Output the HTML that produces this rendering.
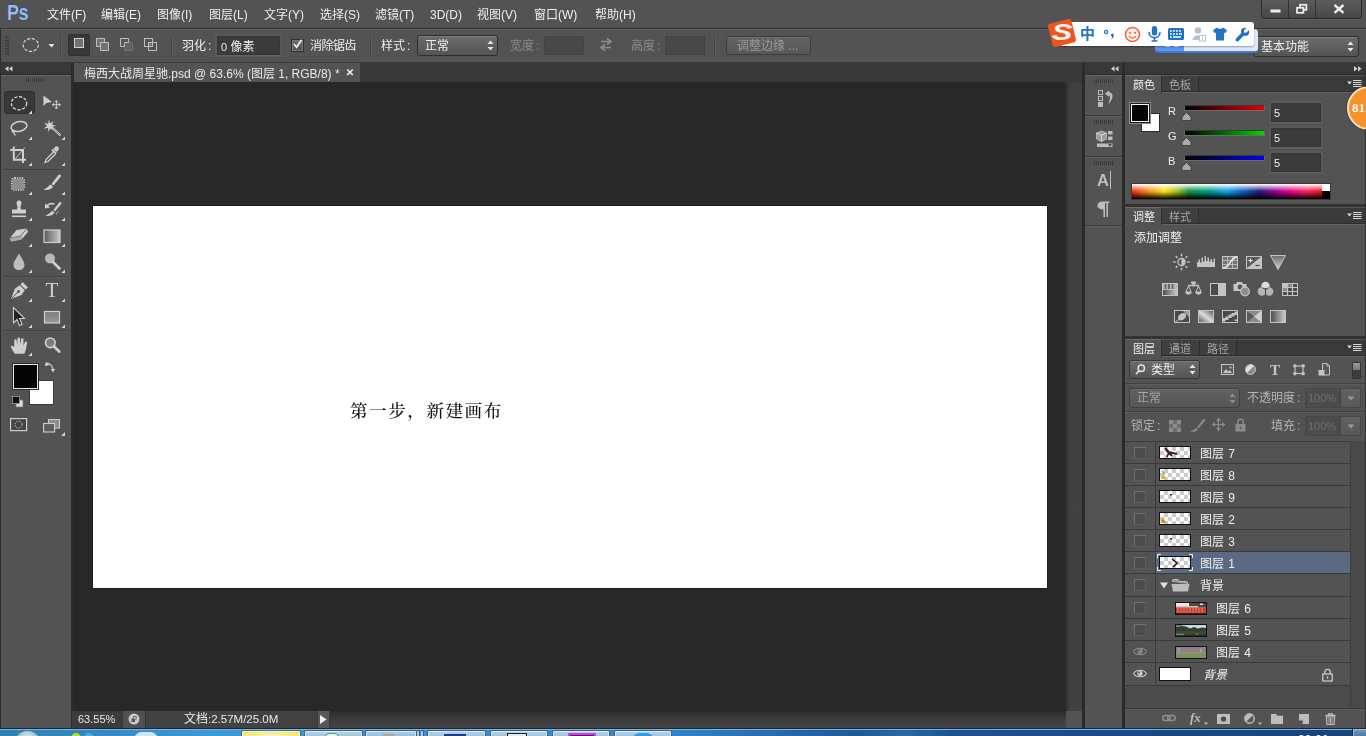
<!DOCTYPE html>
<html lang="zh-CN">
<head>
<meta charset="utf-8">
<title>梅西大战周星驰.psd</title>
<style>
*{box-sizing:border-box;margin:0;padding:0}
html,body{width:1366px;height:736px;overflow:hidden;background:#535353}
body{position:relative;font-family:"Liberation Sans","Noto Sans CJK SC",sans-serif;font-size:12px;color:#eeeeee;line-height:1}
#root{position:absolute;left:0;top:0;width:1366px;height:736px}
span{will-change:transform}
.a{position:absolute}
.t{position:absolute;white-space:nowrap;line-height:14px;height:14px}
svg{position:absolute;overflow:visible}
/* menubar */
#menubar{left:0;top:0;width:1366px;height:28px;background:#535353}
#menubar .t{top:8px;color:#eeeeee}
#mline{left:0;top:28px;width:1366px;height:1px;background:#333}
#pslogo{left:7px;top:1px;font-size:22.5px;font-weight:bold;color:#96bfec;letter-spacing:-0.5px;line-height:24px;height:24px;transform:scaleX(0.8);transform-origin:0 0;text-shadow:0 0 1px #1d4e80}
#winctl{left:1261px;top:0;width:101px;height:19px;border:1px solid #2a2a2a;border-top:none;border-radius:0 0 4px 4px;background:linear-gradient(#5c5c5c,#474747);overflow:hidden;box-shadow:0 1px 0 #626262}
#winctl .wc{top:0;height:19px;border-right:1px solid #333}
/* options bar */
#optbar{left:0;top:29px;width:1366px;height:34px;background:#535353;border-top:1px solid #626262;border-bottom:1px solid #333}
.sep{position:absolute;top:36px;width:1px;height:20px;background:#444;box-shadow:1px 0 0 #5e5e5e}
.field{position:absolute;background:#3b3b3b;border:1px solid #363636;box-shadow:0 0 0 2px rgba(255,255,255,.035),0 1px 0 #5c5c5c}
.c{font-style:normal;margin-left:2px}
.dim{color:#8a8a8a}
.fdim{background:#484848;border-color:#444;box-shadow:none}
/* work area */
#dark-top{left:0;top:62px;width:1366px;height:12px;background:#3a3a3a}
#canvasbg{left:74px;top:82px;width:992px;height:629px;background:#282828}
#canvas{left:93px;top:206px;width:954px;height:382px;background:#fff;box-shadow:0 0 0 1px #1e1e1e}
#doctabbar{left:74px;top:63px;width:1008px;height:20px;background:#393939}
#doctab{left:74px;top:63px;width:286px;height:19px;background:#535353}
/* tools */
#toolhead{left:0;top:63px;width:71px;height:12px;background:#383838;border-bottom:1px solid #2c2c2c}
#tools{left:0;top:75px;width:71px;height:653px;background:#535353;border-top:1px solid #666}
#toolgap{left:71px;top:63px;width:3px;height:665px;background:#2b2b2b}
/* right */
#vscroll{left:1065px;top:83px;width:17px;height:628px;background:linear-gradient(90deg,#2a2a2a 0,#3c3c3c 4px,#424242 7px,#404040 100%)}
#rgap1{left:1082px;top:63px;width:3px;height:665px;background:#2b2b2b}
#iconcol{left:1085px;top:75px;width:37px;height:653px;background:#535353;border-top:1px solid #666}
#rgap2{left:1122px;top:63px;width:3px;height:665px;background:#2b2b2b}
#panels{left:1125px;top:75px;width:241px;height:653px;background:#535353}
#righthead{left:1085px;top:63px;width:281px;height:12px;background:#383838;border-bottom:1px solid #2c2c2c}
#spectrum{background:linear-gradient(rgba(255,255,255,1) 0%,rgba(255,255,255,0) 48%,rgba(0,0,0,0) 52%,rgba(0,0,0,1) 100%),linear-gradient(90deg,#ee2a1c 0%,#f28420 8%,#f4e41c 17%,#a2ba20 24%,#109440 30%,#009482 40%,#10a2e4 50%,#1060c4 58%,#221a74 67%,#860094 74%,#e40084 83%,#f42462 92%,#ea1212 100%)}
.chk{border:1px solid #111;overflow:hidden;background-color:#fff;background-image:linear-gradient(45deg,#ccc 25%,transparent 25%,transparent 75%,#ccc 75%),linear-gradient(45deg,#ccc 25%,transparent 25%,transparent 75%,#ccc 75%);background-size:8px 8px;background-position:0 0,4px 4px}
.th6{background:linear-gradient(#b8b8b0 0,#908878 35%,#c83028 45%,#d84838 70%,#7a3028 85%,#3a3a2a 100%)}
.th5{background:linear-gradient(#a8c0d8 0,#8098a8 25%,#3a4a38 40%,#2e3a2c 75%,#485838 100%)}
.th4{background:linear-gradient(#8a8a80 0,#a09088 30%,#988888 50%,#7a9058 60%,#88a060 100%)}
#ctext{left:350px;top:399px;font-family:"Noto Serif CJK SC","Liberation Serif",serif;font-weight:500;font-size:17.6px;line-height:22px;color:#141414;letter-spacing:1.5px;white-space:nowrap}
/* status */
#status{left:74px;top:711px;width:1008px;height:17px;background:#3a3a3a}
/* taskbar */
#taskbar{left:0;top:728px;width:1366px;height:8px;background:#1d5a8e}
</style>
</head>
<body>
<div id="root">
<div class="a" id="menubar">
<span class="t" style="left:47px">文件(F)</span>
<span class="t" style="left:101px">编辑(E)</span>
<span class="t" style="left:157px">图像(I)</span>
<span class="t" style="left:209px">图层(L)</span>
<span class="t" style="left:264px">文字(Y)</span>
<span class="t" style="left:320px">选择(S)</span>
<span class="t" style="left:375px">滤镜(T)</span>
<span class="t" style="left:430px">3D(D)</span>
<span class="t" style="left:477px">视图(V)</span>
<span class="t" style="left:534px">窗口(W)</span>
<span class="t" style="left:595px">帮助(H)</span>
<div class="a" id="winctl">
<div class="a wc" style="left:0;width:27px"><svg width="27" height="18" style="left:0;top:0"><rect x="8.5" y="9.5" width="10" height="3" fill="#ececec"/></svg></div>
<div class="a wc" style="left:27px;width:27px"><svg width="27" height="18" style="left:0;top:0"><rect x="11" y="4.8" width="6.4" height="5" fill="none" stroke="#ececec" stroke-width="1.8"/><rect x="8" y="7.8" width="6.4" height="5" fill="#505050" stroke="#ececec" stroke-width="1.8"/></svg></div>
<div class="a wc" style="left:54px;width:46px;border-right:none"><svg width="46" height="18" style="left:0;top:0"><path d="M18.5 5 L27.5 12.8 M27.5 5 L18.5 12.8" stroke="#ececec" stroke-width="2.4" fill="none"/></svg></div>
</div>
</div>
<div class="a" id="mline"></div>
<div class="a" id="optbar"></div>
<!--OPT_START-->
<!-- options bar content -->
<div class="a" style="left:5px;top:36px;width:4px;height:20px;background:repeating-linear-gradient(#3a3a3a 0 1px,#535353 1px 2px)"></div>
<svg width="20" height="18" style="left:21px;top:36px"><ellipse cx="9.8" cy="9" rx="7.6" ry="6.4" fill="none" stroke="#dcdcdc" stroke-width="1.1" stroke-dasharray="3.2 1.6"/></svg>
<svg width="8" height="5" style="left:48px;top:44px"><path d="M0.5 0 L6.5 0 L3.5 3.5 Z" fill="#e8e8e8"/></svg>
<div class="sep" style="left:60px"></div>
<div class="a" style="left:68px;top:34px;width:22px;height:22px;background:#383838;border:1px solid #303030;border-radius:2px"></div>
<svg width="12" height="12" style="left:73px;top:37px"><rect x="1.5" y="1.5" width="9" height="9" fill="#727272" stroke="#cfcfcf"/></svg>
<svg width="14" height="14" style="left:96px;top:38px"><rect x="0.5" y="0.5" width="8" height="8" fill="#727272" stroke="#bdbdbd"/><rect x="4.5" y="4.5" width="8" height="8" fill="#727272" stroke="#bdbdbd"/></svg>
<svg width="14" height="14" style="left:120px;top:38px"><rect x="4.5" y="4.5" width="8" height="8" fill="#626262" stroke="#707070"/><path d="M0.5 8.5 V0.5 H8.5 V4.5 H4.5 V8.5 Z" fill="#585858" stroke="#bdbdbd"/></svg>
<svg width="14" height="14" style="left:144px;top:38px"><rect x="0.5" y="0.5" width="8" height="8" fill="none" stroke="#bdbdbd"/><rect x="4.5" y="4.5" width="8" height="8" fill="none" stroke="#bdbdbd"/><rect x="5" y="5" width="3" height="3" fill="#727272"/></svg>
<div class="sep" style="left:171px"></div>
<span class="t" style="left:182px;top:39px">羽化<i class="c">:</i></span>
<div class="field" style="left:217px;top:36px;width:63px;height:19px"></div>
<span class="t" style="left:221px;top:40px"><span style="font-size:11px">0</span> 像素</span>
<div class="a" style="left:291px;top:39px;width:13px;height:13px;background:linear-gradient(#6a6a6a,#505050);border:1px solid #2e2e2e;box-shadow:inset 0 0 0 1px #7a7a7a"></div>
<svg width="13" height="13" style="left:291px;top:38px"><path d="M3 6 L5.6 9.2 L10.6 1.8" fill="none" stroke="#f0f0f0" stroke-width="1.8"/></svg>
<span class="t" style="left:310px;top:39px;letter-spacing:-0.5px">消除锯齿</span>
<div class="sep" style="left:370px"></div>
<span class="t" style="left:381px;top:39px">样式<i class="c">:</i></span>
<div class="a" style="left:417px;top:35px;width:81px;height:21px;border:1px solid #2e2e2e;border-radius:3px;background:linear-gradient(#6c6c6c,#545454);box-shadow:inset 0 1px 0 #7c7c7c"></div>
<span class="t" style="left:425px;top:39px">正常</span>
<svg width="7" height="11" style="left:487px;top:40px"><path d="M0.5 4 L3.5 0.5 L6.5 4 Z M0.5 7 L3.5 10.5 L6.5 7 Z" fill="#e8e8e8"/></svg>
<span class="t dim" style="left:510px;top:39px">宽度<i class="c">:</i></span>
<div class="field fdim" style="left:544px;top:36px;width:40px;height:19px"></div>
<svg width="16" height="13" style="left:598px;top:38px"><path d="M3 3.5 H12 M9 0.5 L13 3.5 L9 6.5 M13 9.5 H4 M7 6.5 L3 9.5 L7 12.5" fill="none" stroke="#8a8a8a" stroke-width="1.6"/></svg>
<span class="t dim" style="left:631px;top:39px">高度<i class="c">:</i></span>
<div class="field fdim" style="left:665px;top:36px;width:40px;height:19px"></div>
<div class="sep" style="left:714px"></div>
<div class="a" style="left:726px;top:36px;width:85px;height:19px;border:1px solid #3c3c3c;border-radius:3px;background:linear-gradient(#626262,#575757);box-shadow:inset 0 1px 0 #6e6e6e"></div>
<span class="t" style="left:737px;top:39px;color:#9a9a9a">调整边缘 ...</span>
<div class="a" style="left:1253px;top:36px;width:106px;height:21px;border:1px solid #2e2e2e;border-radius:3px;background:linear-gradient(#6c6c6c,#545454);box-shadow:inset 0 1px 0 #7c7c7c"></div>
<span class="t" style="left:1261px;top:40px">基本功能</span>
<svg width="7" height="11" style="left:1347px;top:41px"><path d="M0.5 4 L3.5 0.5 L6.5 4 Z M0.5 7 L3.5 10.5 L6.5 7 Z" fill="#e8e8e8"/></svg>
<!--OPT_END-->
<div class="a" id="dark-top"></div>
<div class="a" id="toolhead"></div>
<div class="a" id="tools"></div>
<div class="a" id="toolgap"></div>
<div class="a" style="left:0;top:29px;width:1px;height:699px;background:#2e2e2e"></div>
<!--TOOLS_START-->
<!-- toolbar content -->
<svg width="8" height="6" style="left:5px;top:66px"><path d="M3.5 0 V5.5 L0 2.75 Z M7.5 0 V5.5 L4 2.75 Z" fill="#d0d0d0"/></svg>
<div class="a" style="left:26px;top:78px;width:19px;height:4px;background:repeating-linear-gradient(90deg,#3a3a3a 0 1px,#535353 1px 2px)"></div>
<div class="a" style="left:4px;top:91px;width:31px;height:23px;background:#383838;border:1px solid #2f2f2f;border-radius:3px"></div>
<div class="a" style="left:4px;top:169px;width:63px;height:1px;background:#424242;box-shadow:0 1px 0 #5b5b5b"></div>
<div class="a" style="left:4px;top:276px;width:63px;height:1px;background:#424242;box-shadow:0 1px 0 #5b5b5b"></div>
<div class="a" style="left:4px;top:330px;width:63px;height:1px;background:#424242;box-shadow:0 1px 0 #5b5b5b"></div>
<svg width="24" height="24" viewBox="0 0 24 24" style="left:7px;top:91px"><ellipse cx="12" cy="12.2" rx="7.7" ry="6.6" fill="none" stroke="#e6e6e6" stroke-width="1.2" stroke-dasharray="3.2 1.6"/></svg>
<svg width="4" height="4" style="left:28px;top:110px"><path d="M4 0.5 V4 H0.5 Z" fill="#d8d8d8"/></svg>
<svg width="24" height="24" viewBox="0 0 24 24" style="left:40px;top:91px"><path d="M3.5 4.5 L3.5 15 L6.5 12 L12 11 Z" fill="#cfcfcf"/><path d="M16.4 9.8 V17.6 M12.5 13.7 H20.3 M15 11.2 L16.4 9.4 L17.8 11.2 M15 16.2 L16.4 18 L17.8 16.2 M14 12.3 L12.2 13.7 L14 15.1 M18.8 12.3 L20.6 13.7 L18.8 15.1" fill="none" stroke="#cfcfcf" stroke-width="1"/></svg>
<svg width="24" height="24" viewBox="0 0 24 24" style="left:7px;top:117px"><ellipse cx="12" cy="9.5" rx="8" ry="4.8" transform="rotate(-12 12 9.5)" fill="none" stroke="#cfcfcf" stroke-width="1.5"/><path d="M5.5 13 C4 15 7.5 16 7.5 14 C7.5 12.5 5.5 13.5 6.5 15.5 C7 17 8 17.5 8.5 18.5" fill="none" stroke="#cfcfcf" stroke-width="1.2"/></svg>
<svg width="4" height="4" style="left:28px;top:136px"><path d="M4 0.5 V4 H0.5 Z" fill="#d8d8d8"/></svg>
<svg width="24" height="24" viewBox="0 0 24 24" style="left:40px;top:117px"><path d="M9 2.5 L10 6.5 L13.5 4 L12 7.8 L16 8.5 L12.3 10 L14 13.5 L10.2 11.5 L8.5 15 L8 11 L3.5 11.5 L7 9 L4 5.5 L8 7 Z" fill="#cfcfcf"/><path d="M12 10.5 L20.5 18.5" stroke="#cfcfcf" stroke-width="2.2"/><path d="M12.5 11 L20 18" stroke="#666" stroke-width="0.7"/></svg>
<svg width="4" height="4" style="left:61px;top:136px"><path d="M4 0.5 V4 H0.5 Z" fill="#d8d8d8"/></svg>
<svg width="24" height="24" viewBox="0 0 24 24" style="left:7px;top:143px"><path d="M6.8 3.5 V16.8 H19 M3.2 7 H16 V20" fill="none" stroke="#cfcfcf" stroke-width="2"/><path d="M8.5 15.5 L18 4.5" stroke="#cfcfcf" stroke-width="0.9"/></svg>
<svg width="4" height="4" style="left:28px;top:162px"><path d="M4 0.5 V4 H0.5 Z" fill="#d8d8d8"/></svg>
<svg width="24" height="24" viewBox="0 0 24 24" style="left:40px;top:143px"><path d="M15 4 C16.5 2 20 4.5 18.5 7 L16.5 9 L13.5 6 Z" fill="#cfcfcf"/><path d="M12 6.5 L16 10.5" stroke="#cfcfcf" stroke-width="2"/><path d="M13.5 9 L6 16.5 L5 19.5 L8 18.5 L15.5 11" fill="none" stroke="#cfcfcf" stroke-width="1.3"/></svg>
<svg width="4" height="4" style="left:61px;top:162px"><path d="M4 0.5 V4 H0.5 Z" fill="#d8d8d8"/></svg>
<svg width="24" height="24" viewBox="0 0 24 24" style="left:7px;top:172px"><rect x="5.5" y="6.5" width="11" height="11" rx="2" fill="#8e8e8e"/><rect x="4.8" y="5.8" width="12.4" height="12.4" rx="3" fill="none" stroke="#cfcfcf" stroke-width="1.8" stroke-dasharray="1.2 1.2"/></svg>
<svg width="4" height="4" style="left:28px;top:191px"><path d="M4 0.5 V4 H0.5 Z" fill="#d8d8d8"/></svg>
<svg width="24" height="24" viewBox="0 0 24 24" style="left:40px;top:172px"><path d="M19.5 2.5 C21 2.5 21.5 3.8 20.5 5 L13.5 13.5 L11.5 12 L18 3.5 C18.5 2.8 19 2.5 19.5 2.5 Z" fill="#cfcfcf"/><path d="M10.5 12.5 L13 14.5 C12 17.5 7 18.5 3.5 17.5 C6.5 16.5 8 14.5 10.5 12.5 Z" fill="#cfcfcf"/></svg>
<svg width="4" height="4" style="left:61px;top:191px"><path d="M4 0.5 V4 H0.5 Z" fill="#d8d8d8"/></svg>
<svg width="24" height="24" viewBox="0 0 24 24" style="left:7px;top:198px"><path d="M12 2.5 C14.5 2.5 15 5 14 7 C13.3 8.5 13.5 10 14 11.5 H19 V15.5 H5 V11.5 H10 C10.5 10 10.7 8.5 10 7 C9 5 9.5 2.5 12 2.5 Z" fill="#cfcfcf"/><rect x="5" y="17.5" width="14" height="1.6" fill="#cfcfcf"/></svg>
<svg width="4" height="4" style="left:28px;top:217px"><path d="M4 0.5 V4 H0.5 Z" fill="#d8d8d8"/></svg>
<svg width="24" height="24" viewBox="0 0 24 24" style="left:40px;top:198px"><path d="M20.5 4 C21.5 4.3 21.8 5.3 21 6.3 L15 13.5 L13.2 12.2 L19 4.8 C19.4 4.2 20 3.9 20.5 4 Z" fill="#cfcfcf"/><path d="M12.3 12.8 L14.5 14.6 C13.5 17.5 9 18.5 5.5 17.8 C8.5 16.6 10 14.8 12.3 12.8 Z" fill="#cfcfcf"/><path d="M15 5.5 C12 4 8.5 5 7 7 L5 5.5 L5 10.5 L10 9.5 L8.3 8 C9.8 6.5 12.5 6.3 14 7 Z" fill="#cfcfcf"/><path d="M16 16 L19 12.5" stroke="#cfcfcf" stroke-width="1.2" stroke-dasharray="1 1.2"/></svg>
<svg width="4" height="4" style="left:61px;top:217px"><path d="M4 0.5 V4 H0.5 Z" fill="#d8d8d8"/></svg>
<svg width="24" height="24" viewBox="0 0 24 24" style="left:7px;top:224px"><path d="M9.5 6 L20 4.5 L21 8 L14.5 15.5 L4 17.5 L3 14 Z" fill="#cfcfcf"/><path d="M3 14 L13.5 12 L20 4.5" fill="none" stroke="#6a6a6a" stroke-width="1"/><path d="M13.5 12 L14.5 15.5" stroke="#6a6a6a" stroke-width="0.8"/><path d="M3.2 14.2 L13.4 12.2 L14.3 15.4 L4 17.4 Z" fill="#a8a8a8"/></svg>
<svg width="4" height="4" style="left:28px;top:243px"><path d="M4 0.5 V4 H0.5 Z" fill="#d8d8d8"/></svg>
<svg width="24" height="24" viewBox="0 0 24 24" style="left:40px;top:224px"><defs><linearGradient id="gtool" x1="0" x2="1"><stop offset="0" stop-color="#5a5a5a"/><stop offset="1" stop-color="#c8c8c8"/></linearGradient></defs><rect x="4" y="6" width="16" height="12.5" fill="url(#gtool)" stroke="#cfcfcf" stroke-width="1.2"/></svg>
<svg width="4" height="4" style="left:61px;top:243px"><path d="M4 0.5 V4 H0.5 Z" fill="#d8d8d8"/></svg>
<svg width="24" height="24" viewBox="0 0 24 24" style="left:7px;top:250px"><path d="M12 3 C13 6.5 17.5 11 17.5 15 C17.5 18.5 15 20 12 20 C9 20 6.5 18.5 6.5 15 C6.5 11 11 6.5 12 3 Z" fill="#bdbdbd"/></svg>
<svg width="4" height="4" style="left:28px;top:269px"><path d="M4 0.5 V4 H0.5 Z" fill="#d8d8d8"/></svg>
<svg width="24" height="24" viewBox="0 0 24 24" style="left:40px;top:250px"><circle cx="10" cy="8.5" r="5" fill="#b8b8b8"/><path d="M13 12 L19.5 18.5" stroke="#cfcfcf" stroke-width="2.6" stroke-linecap="round"/></svg>
<svg width="4" height="4" style="left:61px;top:269px"><path d="M4 0.5 V4 H0.5 Z" fill="#d8d8d8"/></svg>
<svg width="24" height="24" viewBox="0 0 24 24" style="left:7px;top:279px"><path d="M15.5 3 L21 8.5 L18.5 10.5 L13.5 5.5 Z" fill="#cfcfcf"/><path d="M12.8 6.3 L17.7 11.2 L14.5 16 L4 20 L8 9.5 Z" fill="#cfcfcf"/><path d="M4.5 19.5 L11 13" stroke="#555" stroke-width="1"/><circle cx="11.5" cy="12.5" r="1.4" fill="#555"/></svg>
<svg width="4" height="4" style="left:28px;top:298px"><path d="M4 0.5 V4 H0.5 Z" fill="#d8d8d8"/></svg>
<span class="a" style="left:45px;top:278px;width:14px;text-align:center;font-family:'Liberation Serif',serif;font-size:21px;line-height:24px;color:#cfcfcf">T</span>
<svg width="4" height="4" style="left:61px;top:298px"><path d="M4 0.5 V4 H0.5 Z" fill="#d8d8d8"/></svg>
<svg width="24" height="24" viewBox="0 0 24 24" style="left:7px;top:305px"><path d="M6.5 2.5 L6.5 18 L10 14.5 L12.5 20.5 L15 19.5 L12.5 13.5 L17.5 13.5 Z" fill="#1e1e1e" stroke="#cfcfcf" stroke-width="1.1"/></svg>
<svg width="4" height="4" style="left:28px;top:324px"><path d="M4 0.5 V4 H0.5 Z" fill="#d8d8d8"/></svg>
<svg width="24" height="24" viewBox="0 0 24 24" style="left:40px;top:305px"><defs><linearGradient id="rtool" x1="0" y1="0" x2="0" y2="1"><stop offset="0" stop-color="#7a7a7a"/><stop offset="1" stop-color="#9a9a9a"/></linearGradient></defs><rect x="4.5" y="6.5" width="15" height="11.5" fill="url(#rtool)" stroke="#cfcfcf" stroke-width="1.2"/></svg>
<svg width="4" height="4" style="left:61px;top:324px"><path d="M4 0.5 V4 H0.5 Z" fill="#d8d8d8"/></svg>
<svg width="24" height="24" viewBox="0 0 24 24" style="left:7px;top:333px"><g transform="translate(0.8,0.8)"><path d="M7 20 C5.5 17.5 3.5 15 3 12.5 C3.8 11.5 5.5 12 6.3 13.5 L6.5 6 C7.2 5 8.6 5.3 8.8 6.3 L9.3 11 L9.8 4.2 C10.6 3.2 12 3.5 12.2 4.5 L12.5 11 L13.5 5 C14.3 4.2 15.6 4.6 15.7 5.6 L15.6 12 L17.3 8 C18.2 7.4 19.3 8 19.2 9 C18.7 12.5 18.3 17 16.5 20 Z" fill="#cfcfcf"/></g></svg>
<svg width="4" height="4" style="left:28px;top:352px"><path d="M4 0.5 V4 H0.5 Z" fill="#d8d8d8"/></svg>
<svg width="24" height="24" viewBox="0 0 24 24" style="left:40px;top:333px"><circle cx="10.3" cy="9.8" r="4.8" fill="#7e7e7e" stroke="#cfcfcf" stroke-width="1.7"/><path d="M14 13.6 L19.2 18.6" stroke="#cfcfcf" stroke-width="2.8" stroke-linecap="round"/></svg>
<div class="a" style="left:29px;top:380px;width:25px;height:25px;background:#fff;border:1px solid #3a3a3a"></div>
<div class="a" style="left:13px;top:364px;width:25px;height:25px;background:#050505;border:1px solid #e8e8e8;box-shadow:0 0 0 1px #2a2a2a"></div>
<svg width="12" height="12" style="left:44px;top:361px"><path d="M2.5 5 V2.5 H5 M2.5 2.5 C6 2.5 9 5 9 9.5" fill="none" stroke="#cfcfcf" stroke-width="1.3"/><path d="M0.5 4.5 L2.5 0.8 L4.8 4.5 Z M6.8 8 L9 11.5 L11.2 8 Z" fill="#cfcfcf"/></svg>
<svg width="12" height="12" style="left:12px;top:396px"><rect x="4" y="4" width="7" height="7" fill="#e0e0e0" stroke="#777" stroke-width="0.8"/><rect x="0.5" y="0.5" width="7" height="7" fill="#111" stroke="#999" stroke-width="0.8"/></svg>
<svg width="18" height="14" style="left:10px;top:418px"><rect x="0.6" y="0.6" width="16" height="12" fill="#444" stroke="#cfcfcf" stroke-width="1.2"/><circle cx="8.6" cy="6.6" r="3.6" fill="none" stroke="#cfcfcf" stroke-width="1" stroke-dasharray="1.3 1"/></svg>
<svg width="18" height="15" style="left:43px;top:419px"><rect x="5.5" y="0.6" width="11" height="8.5" fill="#8a8a8a" stroke="#cfcfcf" stroke-width="1.1"/><rect x="0.6" y="4.5" width="11" height="8.5" fill="#5c5c5c" stroke="#cfcfcf" stroke-width="1.1"/></svg>
<svg width="4" height="4" style="left:61px;top:432px"><path d="M4 0 V4 H0 Z" fill="#d8d8d8"/></svg>
<!--TOOLS_END-->
<div class="a" id="doctabbar"></div>
<div class="a" id="doctab"></div>
<div class="a" id="canvasbg"></div>
<div class="a" id="canvas"></div>
<div class="a" id="vscroll"></div>
<div class="a" id="status"></div>
<!--MID_START-->
<!-- doc tab / canvas / status -->
<span class="t" style="left:84px;top:67px;color:#e8e8e8">梅西大战周星驰.psd @ 63.6% (图层 1, RGB/8) *</span>
<svg width="8" height="8" style="left:346px;top:68px"><path d="M1.2 1.5 L6.8 7 M6.8 1.5 L1.2 7" stroke="#f0f0f0" stroke-width="1.7"/></svg>
<span class="a" id="ctext">第一步，新建画布</span>
<div class="a" style="left:72px;top:711px;width:50px;height:17px;background:#3c3c3c"></div>
<span class="t" style="left:78px;top:712px;color:#e8e8e8;font-size:11px">63.55%</span>
<div class="a" style="left:122px;top:711px;width:24px;height:17px;background:#505050;border-left:1px solid #333;border-right:1px solid #333"></div>
<svg width="12" height="12" style="left:128px;top:713px"><circle cx="6" cy="6" r="5.5" fill="#c8c8c8"/><path d="M5 3 H8.5 V6.5 H7 V9 H3.5 V5.5 H5 Z" fill="#555"/><rect x="5.6" y="3.8" width="2.2" height="2" fill="#c8c8c8"/></svg>
<div class="a" style="left:146px;top:711px;width:171px;height:17px;background:#424242"></div>
<span class="t" style="left:184px;top:712px;color:#e8e8e8">文档<span style="font-size:11.5px">:2.57M/25.0M</span></span>
<div class="a" style="left:317px;top:711px;width:13px;height:17px;background:#585858;border-left:1px solid #3a3a3a;border-right:1px solid #3a3a3a"></div>
<svg width="7" height="9" style="left:320px;top:715px"><path d="M0 0 V9 L6.5 4.5 Z" fill="#f0f0f0"/></svg>
<div class="a" style="left:330px;top:711px;width:736px;height:17px;background:linear-gradient(#2a2a2a 0,#3a3a3a 35%,#454545 100%)"></div>
<div class="a" style="left:1066px;top:711px;width:16px;height:17px;background:#535353"></div>
<!--MID_END-->
<div class="a" id="rgap1"></div>
<div class="a" id="righthead"></div>
<div class="a" id="iconcol"></div>
<div class="a" id="rgap2"></div>
<div class="a" id="panels"></div>
<!--R1_START-->
<!-- right dock -->
<svg width="8" height="6" style="left:1111px;top:66px"><path d="M3.5 0 V5.5 L0 2.75 Z M7.5 0 V5.5 L4 2.75 Z" fill="#d0d0d0"/></svg>
<svg width="8" height="6" style="left:1354px;top:66px"><path d="M0 0 V5.5 L3.5 2.75 Z M4 0 V5.5 L7.5 2.75 Z" fill="#d0d0d0"/></svg>
<div class="a" style="left:1094px;top:79px;width:19px;height:4px;background:repeating-linear-gradient(90deg,#3a3a3a 0 1px,#535353 1px 2px)"></div>
<div class="a" style="left:1094px;top:120px;width:19px;height:4px;background:repeating-linear-gradient(90deg,#3a3a3a 0 1px,#535353 1px 2px)"></div>
<div class="a" style="left:1094px;top:161px;width:19px;height:4px;background:repeating-linear-gradient(90deg,#3a3a3a 0 1px,#535353 1px 2px)"></div>
<div class="a" style="left:1085px;top:115px;width:37px;height:1px;background:#3a3a3a;box-shadow:0 1px 0 #5e5e5e"></div>
<div class="a" style="left:1085px;top:156px;width:37px;height:1px;background:#3a3a3a;box-shadow:0 1px 0 #5e5e5e"></div>
<div class="a" style="left:1085px;top:225px;width:37px;height:1px;background:#3a3a3a;box-shadow:0 1px 0 #5e5e5e"></div>
<svg width="18" height="18" style="left:1096px;top:89px"><rect x="2.5" y="1.5" width="4" height="4" fill="none" stroke="#bcbcbc" stroke-width="1"/><rect x="2.5" y="7.5" width="4" height="4" fill="none" stroke="#bcbcbc" stroke-width="1"/><rect x="2" y="13" width="5" height="5" fill="#bcbcbc"/><path d="M9 4.8 L13 1.5 V3.2 C17.8 3.2 18 10 12 15.3 C14.5 10.5 14.5 6.5 13 6.3 V8 Z" fill="#bcbcbc"/></svg>
<svg width="18" height="18" style="left:1096px;top:130px"><path d="M5.5 1 L10.5 3 V9 L5.5 11.5 L0.5 9 V3 Z" fill="#9a9a9a" stroke="#bcbcbc" stroke-width="0.9"/><path d="M0.5 3 L5.5 5.2 L10.5 3 M5.5 5.2 V11.5" fill="none" stroke="#e0e0e0" stroke-width="0.9"/><rect x="12" y="1" width="4.5" height="3.5" fill="#bcbcbc"/><rect x="12" y="6.5" width="4.5" height="3.5" fill="#bcbcbc"/><rect x="1" y="13.5" width="15.5" height="3.5" fill="#bcbcbc"/><path d="M12 14.3 H16 L14 16.6 Z" fill="#333"/></svg>
<span class="a" style="left:1096.5px;top:170px;font-size:16.5px;font-weight:bold;line-height:20px;color:#bcbcbc">A</span><div class="a" style="left:1110px;top:171px;width:1px;height:18px;background:#bcbcbc"></div>
<svg width="14" height="17" style="left:1097px;top:201px"><path d="M6 0.5 H12.5 V2 H11 V16 H9.4 V2 H8 V16 H6.4 V8.5 C-1.5 8.5 -1.5 0.5 6 0.5 Z" fill="#bcbcbc"/></svg>
<div class="a" style="left:1125px;top:204px;width:241px;height:3px;background:#333"></div>
<div class="a" style="left:1125px;top:336px;width:241px;height:3px;background:#333"></div>
<div class="a" style="left:1125px;top:75px;width:241px;height:17px;background:#3a3a3a;border-top:1px solid #565656;border-bottom:1px solid #2e2e2e"></div>
<div class="a" style="left:1125px;top:92px;width:241px;height:1px;background:#636363"></div>
<div class="a" style="left:1125px;top:75px;width:37px;height:18px;background:#535353;border-right:1px solid #2e2e2e;border-top:1px solid #6a6a6a"></div>
<span class="t" style="left:1133px;top:78px;color:#f0f0f0;font-size:11px">颜色</span>
<div class="a" style="left:1162px;top:76px;width:37px;height:15px;background:#3f3f3f;border-right:1px solid #2e2e2e"></div>
<span class="t" style="left:1169px;top:78px;color:#a6a6a6;font-size:11px">色板</span>
<svg width="15" height="8" style="left:1347px;top:80px"><path d="M0 1.5 H5 L2.5 4.5 Z" fill="#d6d6d6"/><path d="M6 0.5 H14.5 M6 2.5 H14.5 M6 4.5 H14.5 M6 6.5 H14.5" stroke="#d6d6d6" stroke-width="1"/></svg>
<div class="a" style="left:1125px;top:207px;width:241px;height:17px;background:#3a3a3a;border-top:1px solid #565656;border-bottom:1px solid #2e2e2e"></div>
<div class="a" style="left:1125px;top:224px;width:241px;height:1px;background:#636363"></div>
<div class="a" style="left:1125px;top:207px;width:37px;height:18px;background:#535353;border-right:1px solid #2e2e2e;border-top:1px solid #6a6a6a"></div>
<span class="t" style="left:1133px;top:210px;color:#f0f0f0;font-size:11px">调整</span>
<div class="a" style="left:1162px;top:208px;width:37px;height:15px;background:#3f3f3f;border-right:1px solid #2e2e2e"></div>
<span class="t" style="left:1169px;top:210px;color:#a6a6a6;font-size:11px">样式</span>
<svg width="15" height="8" style="left:1347px;top:212px"><path d="M0 1.5 H5 L2.5 4.5 Z" fill="#d6d6d6"/><path d="M6 0.5 H14.5 M6 2.5 H14.5 M6 4.5 H14.5 M6 6.5 H14.5" stroke="#d6d6d6" stroke-width="1"/></svg>
<div class="a" style="left:1125px;top:339px;width:241px;height:17px;background:#3a3a3a;border-top:1px solid #565656;border-bottom:1px solid #2e2e2e"></div>
<div class="a" style="left:1125px;top:356px;width:241px;height:1px;background:#636363"></div>
<div class="a" style="left:1125px;top:339px;width:37px;height:18px;background:#535353;border-right:1px solid #2e2e2e;border-top:1px solid #6a6a6a"></div>
<span class="t" style="left:1133px;top:342px;color:#f0f0f0;font-size:11px">图层</span>
<div class="a" style="left:1162px;top:340px;width:38px;height:15px;background:#3f3f3f;border-right:1px solid #2e2e2e"></div>
<span class="t" style="left:1169px;top:342px;color:#a6a6a6;font-size:11px">通道</span>
<div class="a" style="left:1200px;top:340px;width:37px;height:15px;background:#3f3f3f;border-right:1px solid #2e2e2e"></div>
<span class="t" style="left:1207px;top:342px;color:#a6a6a6;font-size:11px">路径</span>
<svg width="15" height="8" style="left:1347px;top:344px"><path d="M0 1.5 H5 L2.5 4.5 Z" fill="#d6d6d6"/><path d="M6 0.5 H14.5 M6 2.5 H14.5 M6 4.5 H14.5 M6 6.5 H14.5" stroke="#d6d6d6" stroke-width="1"/></svg>
<div class="a" style="left:1140.5px;top:113.2px;width:19px;height:19.2px;background:#fff;border:1px solid #2a2a2a"></div>
<div class="a" style="left:1129px;top:102px;width:22px;height:22px;background:#050505;border:1px solid #8a8a8a;box-shadow:inset 0 0 0 1px #1a1a1a, inset 0 0 0 2px #f4f4f4"></div>
<span class="t" style="left:1168px;top:104px;font-size:11px">R</span>
<div class="a" style="left:1184px;top:105px;width:81px;height:6px;background:linear-gradient(90deg,#000,#e60000);border:1px solid #6a6a6a;border-top-color:#3a3a3a"></div>
<svg width="11" height="9" style="left:1181px;top:112px"><path d="M5.5 0.5 L10 5 V8.5 H1 V5 Z" fill="#a8a8a8" stroke="#3a3a3a" stroke-width="0.8"/></svg>
<div class="field" style="left:1271px;top:103px;width:50px;height:19px"></div>
<span class="t" style="left:1274px;top:106px;font-size:11px">5</span>
<span class="t" style="left:1168px;top:129px;font-size:11px">G</span>
<div class="a" style="left:1184px;top:130px;width:81px;height:6px;background:linear-gradient(90deg,#000,#00d800);border:1px solid #6a6a6a;border-top-color:#3a3a3a"></div>
<svg width="11" height="9" style="left:1181px;top:137px"><path d="M5.5 0.5 L10 5 V8.5 H1 V5 Z" fill="#a8a8a8" stroke="#3a3a3a" stroke-width="0.8"/></svg>
<div class="field" style="left:1271px;top:128px;width:50px;height:19px"></div>
<span class="t" style="left:1274px;top:131px;font-size:11px">5</span>
<span class="t" style="left:1168px;top:154px;font-size:11px">B</span>
<div class="a" style="left:1184px;top:155px;width:81px;height:6px;background:linear-gradient(90deg,#000,#0000f0);border:1px solid #6a6a6a;border-top-color:#3a3a3a"></div>
<svg width="11" height="9" style="left:1181px;top:162px"><path d="M5.5 0.5 L10 5 V8.5 H1 V5 Z" fill="#a8a8a8" stroke="#3a3a3a" stroke-width="0.8"/></svg>
<div class="field" style="left:1271px;top:153px;width:50px;height:19px"></div>
<span class="t" style="left:1274px;top:156px;font-size:11px">5</span>
<div class="a" style="left:1131px;top:183px;width:200px;height:17px;background:#3a3a3a"></div><div class="a" id="spectrum" style="left:1132px;top:184px;width:190px;height:15px"></div>
<div class="a" style="left:1322px;top:184px;width:8px;height:7px;background:#fff"></div><div class="a" style="left:1322px;top:191px;width:8px;height:8px;background:#000"></div>
<div class="a" style="left:1347px;top:86px;width:44px;height:44px;border-radius:50%;background:#f6922c;border:2px solid #fbe3c8;box-shadow:0 0 2px rgba(0,0,0,.5)"></div>
<span class="a" style="left:1352px;top:101px;font-family:'Liberation Serif',serif;font-weight:bold;font-size:13px;line-height:14px;color:#fff">81</span>
<!--R1_END-->
<!--R2_START-->
<!-- adjustments panel -->
<span class="t" style="left:1134px;top:231px;color:#f0f0f0">添加调整</span>
<svg width="0" height="0"><defs><linearGradient id="gh" x1="0" x2="1"><stop offset="0" stop-color="#4a4a4a"/><stop offset="1" stop-color="#d0d0d0"/></linearGradient><linearGradient id="gv" x1="0" y1="0" x2="0" y2="1"><stop offset="0" stop-color="#d0d0d0"/><stop offset="1" stop-color="#4a4a4a"/></linearGradient><linearGradient id="gv2" x1="0" y1="0" x2="0" y2="1"><stop offset="0" stop-color="#6a6a6a"/><stop offset="1" stop-color="#d8d8d8"/></linearGradient><linearGradient id="gd" x1="0" y1="1" x2="1" y2="0"><stop offset="0" stop-color="#555"/><stop offset="0.5" stop-color="#ddd"/><stop offset="1" stop-color="#555"/></linearGradient></defs></svg>
<svg width="18" height="18" style="left:1173px;top:253px"><circle cx="8.5" cy="9" r="3.6" fill="#555" stroke="#c4c4c4" stroke-width="1.2"/><path d="M8.5 5.4 A3.6 3.6 0 0 1 8.5 12.6 Z" fill="#c4c4c4"/><path d="M8.5 0.8 V3.2 M8.5 14.8 V17.2 M0.3 9 H2.7 M14.3 9 H16.7 M2.7 3.2 L4.4 4.9 M12.6 13.1 L14.3 14.8 M2.7 14.8 L4.4 13.1 M12.6 4.9 L14.3 3.2" stroke="#c4c4c4" stroke-width="1.5"/></svg>
<svg width="18" height="11" style="left:1197px;top:256px"><path d="M0 11 V6 L1.5 6 V3.5 H3 V6.5 H4.5 V1.5 H6 V5.5 H7.5 V0 H9 V5 H10.5 V1.5 H12 V5.5 H13.5 V3 H15 V6 H16.5 V2.5 H18 V11 Z" fill="#c4c4c4"/></svg>
<svg width="16" height="13" style="left:1222px;top:256px"><rect x="0.5" y="0.5" width="15" height="12" fill="#747474" stroke="#c4c4c4"/><path d="M0.5 4.5 H15.5 M0.5 8.5 H15.5 M5.5 0.5 V12.5 M10.5 0.5 V12.5" stroke="#c4c4c4" stroke-width="0.8"/><path d="M1 12 C8 12 8 1.5 15 1" fill="none" stroke="#f0f0f0" stroke-width="1.4"/></svg>
<svg width="16" height="13" style="left:1246px;top:256px"><rect x="0.5" y="0.5" width="15" height="12" fill="#5a5a5a" stroke="#c4c4c4"/><path d="M0.5 12.5 L15.5 0.5 V12.5 Z" fill="#c4c4c4"/><path d="M2.5 4.5 H6.5 M4.5 2.5 V6.5" stroke="#eee" stroke-width="1.1"/><path d="M9.5 9.5 H13.5" stroke="#444" stroke-width="1.2"/></svg>
<svg width="16" height="15" style="left:1270px;top:255px"><path d="M0.5 0.5 H15.5 L8 14.5 Z" fill="url(#gv2)" stroke="#c4c4c4" stroke-width="1"/></svg>
<svg width="16" height="13" style="left:1162px;top:283px"><rect x="0.5" y="0.5" width="15" height="12" fill="url(#gh)" stroke="#c4c4c4"/><rect x="1" y="1" width="14" height="5" fill="#b4b4b4"/><path d="M3.5 1 V6 M7 1 V6 M10.5 1 V6" stroke="#6a6a6a" stroke-width="2"/><path d="M1 6.5 H15" stroke="#c4c4c4" stroke-width="0.8"/></svg>
<svg width="17" height="15" style="left:1185px;top:281px"><path d="M8.5 1 V4 M3 4.5 H14 M8.5 4 V5.5" stroke="#c4c4c4" stroke-width="1.6" fill="none"/><path d="M6 0.5 H11 V2 L8.5 4.5 L6 2 Z" fill="#c4c4c4"/><path d="M3.5 5 L0.8 11 H6.2 Z M13.5 5 L10.8 11 H16.2 Z" fill="none" stroke="#c4c4c4" stroke-width="1"/><path d="M0.3 11 H6.7 C6.2 14.5 0.8 14.5 0.3 11 Z M10.3 11 H16.7 C16.2 14.5 10.8 14.5 10.3 11 Z" fill="#c4c4c4"/></svg>
<svg width="16" height="13" style="left:1210px;top:283px"><rect x="0.5" y="0.5" width="15" height="12" fill="#4a4a4a" stroke="#c4c4c4"/><rect x="8" y="1" width="7" height="11" fill="#c4c4c4"/></svg>
<svg width="18" height="16" style="left:1233px;top:281px"><path d="M0.5 3 H3 L4 1 H9 L10 3 H13.5 V10 H0.5 Z" fill="#c4c4c4"/><circle cx="7" cy="6" r="2.4" fill="#555"/><circle cx="12" cy="10.5" r="4.3" fill="#8e8e8e" stroke="#c4c4c4" stroke-width="1.2"/></svg>
<svg width="17" height="16" style="left:1257px;top:281px"><circle cx="8.5" cy="5" r="4.2" fill="#dcdcdc"/><circle cx="4.8" cy="10.5" r="4.2" fill="#b4b4b4"/><circle cx="12.2" cy="10.5" r="4.2" fill="#b4b4b4"/><path d="M8.5 7 V13 M8.5 8.5 L5.5 6.8 M8.5 8.5 L11.5 6.8" stroke="#444" stroke-width="1" fill="none"/></svg>
<svg width="16" height="13" style="left:1282px;top:283px"><rect x="0.5" y="0.5" width="15" height="12" fill="#4a4a4a" stroke="#c4c4c4"/><path d="M0.5 4.5 H15.5 M0.5 8.5 H15.5 M5.5 0.5 V12.5 M10.5 0.5 V12.5" stroke="#c4c4c4" stroke-width="1.2"/><rect x="1" y="1" width="4" height="3" fill="#c4c4c4"/><rect x="6" y="1" width="4" height="3" fill="#8a8a8a"/><rect x="1" y="5" width="4" height="3" fill="#8a8a8a"/></svg>
<svg width="16" height="13" style="left:1174px;top:310px"><rect x="0.5" y="0.5" width="15" height="12" fill="#4a4a4a" stroke="#c4c4c4"/><path d="M1 12.5 L15 1" stroke="#c4c4c4" stroke-width="1"/><path d="M9 1 H15 V7 Z" fill="#9a9a9a"/><ellipse cx="8" cy="6.7" rx="4.3" ry="3" transform="rotate(-35 8 6.7)" fill="#c4c4c4"/></svg>
<svg width="16" height="13" style="left:1198px;top:310px"><rect x="0.5" y="0.5" width="15" height="12" fill="url(#gd)" stroke="#c4c4c4"/></svg>
<svg width="16" height="13" style="left:1222px;top:310px"><rect x="0.5" y="0.5" width="15" height="12" fill="#4a4a4a" stroke="#c4c4c4"/><path d="M1 8 H3.5 V6.5 H6.5 V4.5 H9.5 V3 H12.5 V1.5 H15 V5 H12.5 V6.5 H9.5 V8 H6.5 V10 H3.5 V11.5 H1 Z" fill="#c4c4c4"/><path d="M11 11 H15 V9.5 H12.5 V11" fill="#c4c4c4"/></svg>
<svg width="16" height="13" style="left:1246px;top:310px"><rect x="0.5" y="0.5" width="15" height="12" fill="#8a8a8a" stroke="#c4c4c4"/><path d="M1 1 L8 6.5 L1 12 Z" fill="#5a5a5a"/><path d="M15 1 L8 6.5 L15 12 Z" fill="#d0d0d0"/></svg>
<svg width="16" height="13" style="left:1270px;top:310px"><rect x="0.5" y="0.5" width="15" height="12" fill="url(#gh)" stroke="#c4c4c4"/></svg>
<!-- layers panel -->
<div class="a" style="left:1129px;top:360px;width:71px;height:19px;border:1px solid #363636;border-radius:3px;background:linear-gradient(#6c6c6c,#545454);box-shadow:inset 0 1px 0 #7c7c7c"></div>
<svg width="11" height="11" style="left:1135px;top:364px"><circle cx="6.3" cy="4.3" r="3.2" fill="none" stroke="#e0e0e0" stroke-width="1.5"/><path d="M4 6.8 L1 10" stroke="#e0e0e0" stroke-width="1.8"/></svg>
<span class="t" style="left:1151px;top:363px;color:#f0f0f0">类型</span>
<svg width="7" height="11" style="left:1189px;top:364px"><path d="M0.5 4 L3.5 0.5 L6.5 4 Z M0.5 7 L3.5 10.5 L6.5 7 Z" fill="#e8e8e8"/></svg>
<svg width="13" height="11" style="left:1221px;top:364px"><rect x="0.5" y="0.5" width="12" height="10" fill="#5a5a5a" stroke="#c4c4c4"/><path d="M2 9 L5 5 L7 7.5 L9 6 L11 9 Z" fill="#c4c4c4"/><circle cx="9.5" cy="3.5" r="1.1" fill="#c4c4c4"/></svg>
<svg width="11" height="11" style="left:1245px;top:364px"><circle cx="5.5" cy="5.5" r="5" fill="#8a8a8a" stroke="#c4c4c4" stroke-width="1"/><path d="M2 9 A5 5 0 0 1 9 2 Z" fill="#e0e0e0"/></svg>
<span class="a" style="left:1270px;top:361px;font-family:'Liberation Serif',serif;font-weight:bold;font-size:15px;line-height:18px;color:#c4c4c4">T</span>
<svg width="12" height="12" style="left:1293px;top:364px"><rect x="2" y="2" width="8" height="7.5" fill="none" stroke="#c4c4c4" stroke-width="1.2"/><rect x="0.3" y="0.3" width="3" height="3" fill="#c4c4c4"/><rect x="8.7" y="0.3" width="3" height="3" fill="#c4c4c4"/><rect x="0.3" y="8.2" width="3" height="3" fill="#c4c4c4"/><rect x="8.7" y="8.2" width="3" height="3" fill="#c4c4c4"/></svg>
<svg width="12" height="13" style="left:1318px;top:363px"><path d="M4.5 0.5 H9 L11.5 3 V12 H4.5 Z" fill="#5a5a5a" stroke="#c4c4c4" stroke-width="1"/><path d="M9 0.5 V3 H11.5" fill="none" stroke="#c4c4c4" stroke-width="0.9"/><rect x="0.5" y="7" width="6" height="5.5" fill="#c4c4c4"/></svg>
<div class="a" style="left:1352px;top:362px;width:9px;height:17px;border:1px solid #333;background:linear-gradient(#9a9a9a 0,#7a7a7a 45%,#3c3c3c 45%,#3c3c3c 100%);border-radius:1px"></div>
<div class="a" style="left:1125px;top:383px;width:241px;height:1px;background:#424242;box-shadow:0 1px 0 #5c5c5c"></div>
<div class="a" style="left:1129px;top:388px;width:111px;height:20px;border:1px solid #404040;border-radius:3px;background:linear-gradient(#616161,#565656);box-shadow:inset 0 1px 0 #6a6a6a"></div>
<span class="t" style="left:1137px;top:391px;color:#a4a4a4">正常</span>
<svg width="7" height="11" style="left:1229px;top:393px"><path d="M0.5 4 L3.5 0.5 L6.5 4 Z M0.5 7 L3.5 10.5 L6.5 7 Z" fill="#8e8e8e"/></svg>
<span class="t" style="left:1247px;top:391px;color:#b4b4b4">不透明度<i class="c">:</i></span>
<div class="a" style="left:1305px;top:388px;width:35px;height:20px;background:#4c4c4c;border:1px solid #474747"></div>
<span class="t" style="left:1308px;top:391px;color:#707070;font-size:11px">100%</span>
<div class="a" style="left:1340px;top:388px;width:21px;height:20px;border:1px solid #474747;background:linear-gradient(#626262,#585858);border-radius:0 2px 2px 0"></div>
<svg width="8" height="5" style="left:1347px;top:396px"><path d="M0.5 0.5 H7.5 L4 4.5 Z" fill="#9a9a9a"/></svg>
<div class="a" style="left:1125px;top:411px;width:241px;height:1px;background:#424242;box-shadow:0 1px 0 #5c5c5c"></div>
<span class="t" style="left:1131px;top:419px;color:#b4b4b4">锁定<i class="c">:</i></span>
<svg width="12" height="12" style="left:1169px;top:420px"><rect x="0" y="0" width="12" height="12" fill="#6e6e6e"/><path d="M0 0 H4 V4 H0 Z M8 0 H12 V4 H8 Z M4 4 H8 V8 H4 Z M0 8 H4 V12 H0 Z M8 8 H12 V12 H8 Z" fill="#8c8c8c"/></svg>
<svg width="17" height="15" style="left:1189px;top:418px"><path d="M15.5 1 C16.5 1.2 16.5 2 16 2.8 L9.5 10.5 L8 9.3 L14 1.6 C14.5 1 15 0.9 15.5 1 Z" fill="#8c8c8c"/><path d="M7.2 9.8 L9 11.3 C8 13.8 4 14.2 1 13.6 C3.5 12.8 5 11.5 7.2 9.8 Z" fill="#8c8c8c"/></svg>
<svg width="13" height="13" style="left:1212px;top:418px"><path d="M6.5 1 V12 M1 6.5 H12 M4.5 3 L6.5 0.5 L8.5 3 M4.5 10 L6.5 12.5 L8.5 10 M3 4.5 L0.5 6.5 L3 8.5 M10 4.5 L12.5 6.5 L10 8.5" fill="none" stroke="#8c8c8c" stroke-width="1.2"/></svg>
<svg width="11" height="14" style="left:1235px;top:418px"><path d="M2.8 6 V4 C2.8 0.2 8.2 0.2 8.2 4 V6" fill="none" stroke="#8c8c8c" stroke-width="1.5"/><rect x="0.5" y="6" width="10" height="7.5" fill="#8c8c8c"/><rect x="4.8" y="8.5" width="1.4" height="2.5" fill="#555"/></svg>
<span class="t" style="left:1271px;top:419px;color:#b4b4b4">填充<i class="c">:</i></span>
<div class="a" style="left:1305px;top:416px;width:35px;height:20px;background:#4c4c4c;border:1px solid #474747"></div>
<span class="t" style="left:1308px;top:419px;color:#707070;font-size:11px">100%</span>
<div class="a" style="left:1340px;top:416px;width:21px;height:20px;border:1px solid #474747;background:linear-gradient(#626262,#585858);border-radius:0 2px 2px 0"></div>
<svg width="8" height="5" style="left:1347px;top:424px"><path d="M0.5 0.5 H7.5 L4 4.5 Z" fill="#9a9a9a"/></svg>
<!--R2_END-->
<!--R3_START-->
<!-- layer list -->
<div class="a" style="left:1125px;top:441px;width:226px;height:1px;background:#3a3a3a"></div>
<div class="a" style="left:1125px;top:686px;width:226px;height:22px;background:#4b4b4b"></div>
<div class="a" style="left:1350px;top:441px;width:16px;height:267px;background:#494949;border-left:1px solid #3e3e3e"></div>
<div class="a" style="left:1125px;top:442px;width:31px;height:243px;background:#535353;border-right:1px solid #3a3a3a"></div>
<div class="a" style="left:1125px;top:463px;width:226px;height:1px;background:#3a3a3a"></div>
<div class="a" style="left:1134px;top:447px;width:12px;height:12px;border:1px solid #707070;border-right-color:#5e5e5e;border-bottom-color:#5e5e5e;background:#4c4c4c"></div>
<div class="a chk" style="left:1159px;top:446px;width:32px;height:13px"><svg width="30" height="12" style="left:0;top:0"><path d="M5 1 L9 5 L7 10 M8 5 L17 7 M6 3 L12 9" stroke="#3a1f2a" stroke-width="1.8" fill="none"/><path d="M7 2 L10 6" stroke="#a02030" stroke-width="1"/></svg></div>
<span class="t" style="left:1200px;top:447px;color:#f0f0f0;word-spacing:1px">图层 7</span>
<div class="a" style="left:1125px;top:485px;width:226px;height:1px;background:#3a3a3a"></div>
<div class="a" style="left:1134px;top:469px;width:12px;height:12px;border:1px solid #707070;border-right-color:#5e5e5e;border-bottom-color:#5e5e5e;background:#4c4c4c"></div>
<div class="a chk" style="left:1159px;top:468px;width:32px;height:13px"><svg width="30" height="12" style="left:0;top:0"><path d="M1 10 L3 4 L6 10 Z" fill="#e8b020"/><path d="M2 2 L5 5" stroke="#80a0d0" stroke-width="1.5"/></svg></div>
<span class="t" style="left:1200px;top:469px;color:#f0f0f0;word-spacing:1px">图层 8</span>
<div class="a" style="left:1125px;top:507px;width:226px;height:1px;background:#3a3a3a"></div>
<div class="a" style="left:1134px;top:491px;width:12px;height:12px;border:1px solid #707070;border-right-color:#5e5e5e;border-bottom-color:#5e5e5e;background:#4c4c4c"></div>
<div class="a chk" style="left:1159px;top:490px;width:32px;height:13px"><svg width="30" height="12" style="left:0;top:0"><rect x="10" y="3" width="2" height="1.5" fill="#333"/></svg></div>
<span class="t" style="left:1200px;top:491px;color:#f0f0f0;word-spacing:1px">图层 9</span>
<div class="a" style="left:1125px;top:529px;width:226px;height:1px;background:#3a3a3a"></div>
<div class="a" style="left:1134px;top:513px;width:12px;height:12px;border:1px solid #707070;border-right-color:#5e5e5e;border-bottom-color:#5e5e5e;background:#4c4c4c"></div>
<div class="a chk" style="left:1159px;top:512px;width:32px;height:13px"><svg width="30" height="12" style="left:0;top:0"><path d="M0.5 10 L3 4 L6 10 Z" fill="#e8a020"/><path d="M2 7 L5 9" stroke="#c05010" stroke-width="1"/></svg></div>
<span class="t" style="left:1200px;top:513px;color:#f0f0f0;word-spacing:1px">图层 2</span>
<div class="a" style="left:1125px;top:551px;width:226px;height:1px;background:#3a3a3a"></div>
<div class="a" style="left:1134px;top:535px;width:12px;height:12px;border:1px solid #707070;border-right-color:#5e5e5e;border-bottom-color:#5e5e5e;background:#4c4c4c"></div>
<div class="a chk" style="left:1159px;top:534px;width:32px;height:13px"><svg width="30" height="12" style="left:0;top:0"><rect x="10" y="3" width="2" height="1.5" fill="#333"/></svg></div>
<span class="t" style="left:1200px;top:535px;color:#f0f0f0;word-spacing:1px">图层 3</span>
<div class="a" style="left:1156px;top:552px;width:194px;height:21px;background:#5b6a83"></div>
<div class="a" style="left:1125px;top:573px;width:226px;height:1px;background:#3a3a3a"></div>
<div class="a" style="left:1134px;top:557px;width:12px;height:12px;border:1px solid #707070;border-right-color:#5e5e5e;border-bottom-color:#5e5e5e;background:#4c4c4c"></div>
<div class="a chk" style="left:1159px;top:556px;width:32px;height:13px"><svg width="30" height="12" style="left:0;top:0"><path d="M12 2 L17 6 L13 10" stroke="#2a1a1a" stroke-width="1.6" fill="none"/></svg></div>
<svg width="36" height="18" style="left:1157px;top:554px"><path d="M0.5 4 V0.5 H4 M32 0.5 H35.5 V4 M35.5 13 V16.5 H32 M4 16.5 H0.5 V13" fill="none" stroke="#f0f0f0" stroke-width="1"/></svg>
<span class="t" style="left:1200px;top:557px;color:#f0f0f0;word-spacing:1px">图层 1</span>
<div class="a" style="left:1125px;top:596px;width:226px;height:1px;background:#3a3a3a"></div>
<div class="a" style="left:1134px;top:579px;width:12px;height:12px;border:1px solid #707070;border-right-color:#5e5e5e;border-bottom-color:#5e5e5e;background:#4c4c4c"></div>
<svg width="8" height="7" style="left:1160px;top:582px"><path d="M0 0.5 H8 L4 6.5 Z" fill="#e0e0e0"/></svg>
<svg width="19" height="13" style="left:1171px;top:579px"><path d="M1.5 3 V1.5 C1.5 0.8 2 0.5 2.5 0.5 H7 L8.5 2.5 H15.5 C16 2.5 16.5 3 16.5 3.5 V5" fill="#9a9a9a" stroke="#cfcfcf" stroke-width="0.8"/><path d="M0.5 5 H18.5 L17 12.5 H2 Z" fill="#bdbdbd"/></svg>
<span class="t" style="left:1200px;top:579px;color:#f0f0f0;word-spacing:1px">背景</span>
<div class="a" style="left:1125px;top:618px;width:226px;height:1px;background:#3a3a3a"></div>
<div class="a" style="left:1134px;top:602px;width:12px;height:12px;border:1px solid #707070;border-right-color:#5e5e5e;border-bottom-color:#5e5e5e;background:#4c4c4c"></div>
<div class="a" style="left:1175px;top:602px;width:32px;height:13px;border:1px solid #111;overflow:hidden"><svg width="30" height="11" style="left:0;top:0"><rect width="30" height="11" fill="#c8c8c0"/><path d="M0 0 H13 V3 H0 Z" fill="#e8e8e4"/><path d="M13 0 H30 V4.5 H22 V3 H13 Z" fill="#4a4a40"/><path d="M24 0.5 H27 V2 H24 Z" fill="#ddd"/><rect y="4.5" width="30" height="5.5" fill="#d03c30"/><path d="M2 5 V10 M5 5.5 V10 M8 5 V10 M11 5.5 V10 M14 5 V10 M17 5.5 V10 M20 5 V10 M23 5.5 V10 M26 5 V10" stroke="#f0b0a0" stroke-width="0.9" stroke-dasharray="1.5 1"/><rect y="10" width="30" height="1" fill="#3a2a20"/></svg></div>
<span class="t" style="left:1216px;top:602px;color:#f0f0f0;word-spacing:1px">图层 6</span>
<div class="a" style="left:1125px;top:640px;width:226px;height:1px;background:#3a3a3a"></div>
<div class="a" style="left:1134px;top:624px;width:12px;height:12px;border:1px solid #707070;border-right-color:#5e5e5e;border-bottom-color:#5e5e5e;background:#4c4c4c"></div>
<div class="a" style="left:1175px;top:624px;width:32px;height:13px;border:1px solid #111;overflow:hidden"><svg width="30" height="11" style="left:0;top:0"><rect width="30" height="11" fill="#34402f"/><path d="M0 0 H30 V3 L26 2.5 L22 3.5 L18 2 L14 3.5 L10 1.5 L6 1 L0 2 Z" fill="#c4d8e6"/><path d="M0 0 H7 L6 1 L0 2 Z" fill="#6a7a78"/><path d="M0 6.5 H30 V9 H0 Z" fill="#3e4a36"/><path d="M0 9.3 H8 M20 9 H22" stroke="#a0a89a" stroke-width="0.8"/><rect y="10" width="30" height="1" fill="#2a3226"/></svg></div>
<span class="t" style="left:1216px;top:624px;color:#f0f0f0;word-spacing:1px">图层 5</span>
<div class="a" style="left:1125px;top:662px;width:226px;height:1px;background:#3a3a3a"></div>
<svg width="14" height="9" style="left:1133px;top:647px"><path d="M0.5 4.5 C3 0.2 11 0.2 13.5 4.5 C11 8.8 3 8.8 0.5 4.5 Z" fill="#4e4e4e" stroke="#8e8e8e" stroke-width="1.1"/><circle cx="7" cy="4.3" r="2.6" fill="#8e8e8e"/><circle cx="6.2" cy="3.5" r="0.9" fill="#4e4e4e"/></svg>
<div class="a" style="left:1175px;top:646px;width:32px;height:13px;border:1px solid #111;overflow:hidden"><svg width="30" height="11" style="left:0;top:0"><rect width="30" height="11" fill="#8a848a"/><path d="M0 2.5 H30 V5.5 H0 Z" fill="#a07880"/><path d="M3 1 V5 M25 1.5 V5" stroke="#c8c0c8" stroke-width="0.8"/><path d="M0 5.5 H30 V11 H0 Z" fill="#7c9462"/><path d="M0 6 H30" stroke="#98a088" stroke-width="0.8"/></svg></div>
<span class="t" style="left:1216px;top:646px;color:#f0f0f0;word-spacing:1px">图层 4</span>
<div class="a" style="left:1125px;top:685px;width:226px;height:1px;background:#3a3a3a"></div>
<svg width="14" height="9" style="left:1133px;top:669px"><path d="M0.5 4.5 C3 0.2 11 0.2 13.5 4.5 C11 8.8 3 8.8 0.5 4.5 Z" fill="#4e4e4e" stroke="#d0d0d0" stroke-width="1.1"/><circle cx="7" cy="4.3" r="2.6" fill="#d0d0d0"/><circle cx="6.2" cy="3.5" r="0.9" fill="#4e4e4e"/></svg>
<div class="a" style="left:1159px;top:667px;width:32px;height:14px;background:#fff;border:1px solid #111"></div>
<span class="t" style="left:1203px;top:668px;color:#f0f0f0;font-style:italic">背景</span>
<svg width="11" height="14" style="left:1322px;top:668px"><path d="M2.8 6 V4 C2.8 0.4 8.2 0.4 8.2 4 V6" fill="none" stroke="#c8c8c8" stroke-width="1.3"/><rect x="0.8" y="6" width="9.4" height="7" fill="none" stroke="#c8c8c8" stroke-width="1.3"/><rect x="4.8" y="8.3" width="1.4" height="2.4" fill="#c8c8c8"/></svg>
<div class="a" style="left:1125px;top:708px;width:241px;height:1px;background:#3a3a3a;box-shadow:0 1px 0 #5c5c5c"></div>
<svg width="14" height="8" style="left:1162px;top:714px"><rect x="0.8" y="1.5" width="7.5" height="5" rx="2.5" fill="none" stroke="#8e8e8e" stroke-width="1.5"/><rect x="5.7" y="1.5" width="7.5" height="5" rx="2.5" fill="none" stroke="#8e8e8e" stroke-width="1.5"/></svg>
<span class="a" style="left:1190px;top:709px;font-family:'Liberation Serif',serif;font-style:italic;font-weight:bold;font-size:13px;line-height:18px;color:#bdbdbd">fx</span>
<svg width="4" height="3" style="left:1204px;top:722px"><path d="M0 0.5 H4 L2 3 Z" fill="#bdbdbd"/></svg>
<svg width="13" height="10" style="left:1217px;top:714px"><rect x="0" y="0" width="13" height="10" fill="#bdbdbd"/><circle cx="6.5" cy="5" r="2.6" fill="#4a4a4a"/></svg>
<svg width="11" height="11" style="left:1244px;top:713px"><circle cx="5.5" cy="5.5" r="4.7" fill="#5a5a5a" stroke="#bdbdbd" stroke-width="1.4"/><path d="M2.2 8.8 A4.7 4.7 0 0 1 8.8 2.2 Z" fill="#bdbdbd"/></svg>
<svg width="4" height="3" style="left:1258px;top:722px"><path d="M0 0.5 H4 L2 3 Z" fill="#bdbdbd"/></svg>
<svg width="12" height="10" style="left:1271px;top:714px"><path d="M0 1 C0 0.4 0.4 0 1 0 H5 L6.5 1.8 H12 V10 H0 Z" fill="#bdbdbd"/></svg>
<svg width="10" height="10" style="left:1299px;top:714px"><path d="M0 0 H10 V10 H3.5 L0 6.5 Z" fill="#bdbdbd"/><path d="M0 6.5 H3.5 V10 Z" fill="#3c3c3c"/><path d="M0.3 6.3 H3.7 V9.7" fill="none" stroke="#8a8a8a" stroke-width="0.7"/></svg>
<svg width="11" height="12" style="left:1325px;top:713px"><path d="M0.3 2.4 H10.7 M3.6 2.4 V0.8 H7.4 V2.4" fill="none" stroke="#bdbdbd" stroke-width="1.3"/><path d="M1.4 3.8 H9.6 L9 11.4 H2 Z" fill="none" stroke="#bdbdbd" stroke-width="1.2"/><path d="M4 5 V10.4 M5.5 5 V10.4 M7 5 V10.4" stroke="#bdbdbd" stroke-width="0.9"/></svg>
<!--R3_END-->
<div class="a" style="left:1365px;top:63px;width:1px;height:24px;background:#303030"></div><div class="a" style="left:1365px;top:129px;width:1px;height:599px;background:#303030"></div>
<!--TASK_START-->
<!-- taskbar -->
<div class="a" style="left:0;top:728px;width:1366px;height:8px;background:linear-gradient(90deg,#2f7fb0 0,#3688c0 100px,#3d9ad8 210px,#3a90d2 420px,#3084cc 672px,#2a6cac 770px,#1f5896 860px,#2a68a4 905px,#1d5290 950px,#1a4a86 1100px,#17437c 1366px);border-top:1px solid #14283c;box-shadow:inset 0 1px 0 #7ab4e0"></div>
<div class="a" style="left:14px;top:731px;width:27px;height:27px;border-radius:50%;background:radial-gradient(circle at 50% 30%,#e8eef4,#8aa8c0 60%,#4a7090)"></div>
<div class="a" style="left:71px;top:733px;width:10px;height:6px;border-radius:5px 5px 0 0;background:#c8d820"></div><div class="a" style="left:84px;top:733px;width:10px;height:6px;border-radius:5px 5px 0 0;background:#40b0e8"></div>
<div class="a" style="left:134px;top:732px;width:24px;height:8px;border-radius:12px 12px 0 0;background:#cfe8f8"></div>
<div class="a" style="left:241px;top:730px;width:60px;height:8px;border-radius:2px 2px 0 0;border:1px solid rgba(20,50,80,.7);box-shadow:inset 0 0 0 1px rgba(255,255,255,.55);background:radial-gradient(ellipse at 50% 100%,#fff 0,#f6ec8a 45%,#f0e47a 100%)"></div>
<div class="a" style="left:304px;top:730px;width:59px;height:8px;border-radius:2px 2px 0 0;border:1px solid rgba(20,50,80,.7);box-shadow:inset 0 0 0 1px rgba(255,255,255,.55);background:linear-gradient(#b8d4e8,#9cc0dc)"></div><div class="a" style="left:325px;top:733px;width:14px;height:5px;border-radius:7px 7px 0 0;background:#f4f8f4;border:1px solid #50a850"></div>
<div class="a" style="left:365px;top:730px;width:52px;height:8px;border-radius:2px 2px 0 0;border:1px solid rgba(20,50,80,.7);box-shadow:inset 0 0 0 1px rgba(255,255,255,.55);background:linear-gradient(#b0cee4,#94badc)"></div><div class="a" style="left:383px;top:734px;width:12px;height:3px;background:#b0a890"></div>
<div class="a" style="left:417px;top:730px;width:3px;height:8px;border:1px solid rgba(20,50,80,.7);border-left:none;background:#a8c8e0"></div><div class="a" style="left:421px;top:730px;width:3px;height:8px;border:1px solid rgba(20,50,80,.7);border-left:none;background:#a8c8e0"></div>
<div class="a" style="left:427px;top:730px;width:59px;height:8px;border-radius:2px 2px 0 0;border:1px solid rgba(20,50,80,.7);box-shadow:inset 0 0 0 1px rgba(255,255,255,.55);background:linear-gradient(#b8d4e8,#9cc0dc)"></div><div class="a" style="left:444px;top:734px;width:22px;height:3px;background:#203890"></div>
<div class="a" style="left:490px;top:730px;width:58px;height:8px;border-radius:2px 2px 0 0;border:1px solid rgba(20,50,80,.7);box-shadow:inset 0 0 0 1px rgba(255,255,255,.55);background:linear-gradient(#b8d4e8,#9cc0dc)"></div><div class="a" style="left:507px;top:733px;width:20px;height:4px;border:1px solid #222;border-bottom:none;background:#e8e8e8"></div>
<div class="a" style="left:552px;top:730px;width:58px;height:8px;border-radius:2px 2px 0 0;border:1px solid rgba(20,50,80,.7);box-shadow:inset 0 0 0 1px rgba(255,255,255,.55);background:linear-gradient(#b8d4e8,#9cc0dc)"></div><div class="a" style="left:568px;top:733px;width:28px;height:4px;background:#5a1a6a;border:2px solid #d040d8;border-bottom:none"></div>
<div class="a" style="left:614px;top:730px;width:58px;height:8px;border-radius:2px 2px 0 0;border:1px solid rgba(20,50,80,.7);box-shadow:inset 0 0 0 1px rgba(255,255,255,.55);background:linear-gradient(#b8d4e8,#9cc0dc)"></div><div class="a" style="left:632px;top:733px;width:22px;height:8px;border-radius:11px 11px 0 0;background:#2a9cf0"></div>
<span class="a" style="left:1298px;top:734px;font-size:12px;line-height:12px;font-weight:bold;color:#fff;white-space:nowrap">20:01</span>
<div class="a" style="left:1352px;top:729px;width:14px;height:8px;border-left:1px solid #0f2a44;background:linear-gradient(#7a9cc0,#4a74a0);box-shadow:inset 1px 1px 0 rgba(255,255,255,.4)"></div>
<!--TASK_END-->
<!--IME_START-->
<!-- IME toolbar -->
<div class="a" style="left:1155px;top:29px;width:103px;height:24px;border-radius:4px;background:linear-gradient(90deg,#5a96f2 0,#5a96f2 29px,#dfe9fb 29px);border-bottom:2px solid #3c7ad6"></div>
<div class="a" style="left:1165px;top:45px;width:5px;height:2px;background:#fff;border-radius:1px"></div><div class="a" style="left:1174px;top:45px;width:5px;height:2px;background:#fff;border-radius:1px"></div>
<div class="a" style="left:1060px;top:22px;width:194px;height:24px;background:#fff;border-radius:3px;box-shadow:0 1px 2px rgba(0,0,0,.35)"></div>
<div class="a" style="left:1049.5px;top:20.5px;width:24px;height:24px;background:#f0541e;border-radius:3px;transform:rotate(-14deg)"></div>
<span class="a" style="left:1051px;top:17px;width:22px;text-align:center;font-size:26px;line-height:30px;font-weight:bold;font-style:italic;color:#fff;transform:scale(1.2,0.88)">S</span>
<span class="a" style="left:1080px;top:25px;font-size:15px;line-height:18px;font-weight:bold;color:#2272c3">中</span>
<svg width="13" height="14" style="left:1103px;top:27px"><circle cx="3" cy="5" r="1.6" fill="none" stroke="#2272c3" stroke-width="1.3"/><path d="M9.5 6.5 C11.5 6.5 11.5 10.5 8 12.5 C9.5 10.5 9 9.5 8.3 8.8 C7.5 8 8.3 6.5 9.5 6.5 Z" fill="#2272c3"/></svg>
<svg width="17" height="17" style="left:1123.5px;top:25.5px"><circle cx="8.5" cy="8.5" r="7" fill="#fff7f2" stroke="#f0673a" stroke-width="1.6"/><circle cx="6" cy="6.8" r="1.1" fill="#f0673a"/><circle cx="11" cy="6.8" r="1.1" fill="#f0673a"/><path d="M5 10 C6.5 12.8 10.5 12.8 12 10" fill="none" stroke="#f0673a" stroke-width="1.3"/></svg>
<svg width="13" height="16" style="left:1148px;top:26px"><rect x="3.8" y="0" width="5.4" height="9.5" rx="2.7" fill="#2272c3"/><path d="M1 6 C1 13.5 12 13.5 12 6" fill="none" stroke="#2272c3" stroke-width="1.5"/><path d="M6.5 11.5 V15 M3.5 15 H9.5" stroke="#2272c3" stroke-width="1.5"/></svg>
<svg width="16" height="12" style="left:1168px;top:28px"><rect x="0" y="0" width="16" height="12" rx="1.5" fill="#2272c3"/><path d="M2 3 H3.8 M5 3 H6.8 M8 3 H9.8 M11 3 H12.8 M2 6 H3.8 M5 6 H6.8 M8 6 H9.8 M11 6 H14 M2 9 H3.8 M5 9 H12.8" stroke="#fff" stroke-width="1.4"/></svg>
<svg width="15" height="15" style="left:1192px;top:27px"><circle cx="6" cy="3.5" r="3.2" fill="#b6bfce"/><path d="M0.5 13 C0.5 6.5 11.5 6.5 11.5 13 Z" fill="#b6bfce"/><rect x="7.5" y="8.5" width="6" height="5.5" fill="#fff" stroke="#b6bfce" stroke-width="1"/><path d="M10.5 10 V10.8 M10.5 12 V12.8" stroke="#9aa4b5" stroke-width="1"/></svg>
<svg width="14" height="14" style="left:1213px;top:27px"><path d="M4 0.5 C5 2.2 9 2.2 10 0.5 L14 3.2 L12.3 6.2 L11 5.5 V13.5 H3 V5.5 L1.7 6.2 L0 3.2 Z" fill="#2272c3"/></svg>
<svg width="15" height="15" style="left:1234.5px;top:26.5px"><path d="M13.8 3.2 L11.2 5.8 L9.2 5.4 L8.8 3.6 L11.4 1 C9.5 0.2 7.4 0.8 6.4 2.6 C5.8 3.8 5.9 5 6.3 6 L0.8 11.8 C-0.2 13.2 1.8 15.2 3.2 14.2 L9 8.6 C10.2 9.1 11.6 9 12.7 8.2 C14.3 7 14.6 4.9 13.8 3.2 Z" fill="#2272c3"/></svg>
<!--IME_END-->
<span class="a" id="pslogo">Ps</span>
</div>
</body>
</html>
